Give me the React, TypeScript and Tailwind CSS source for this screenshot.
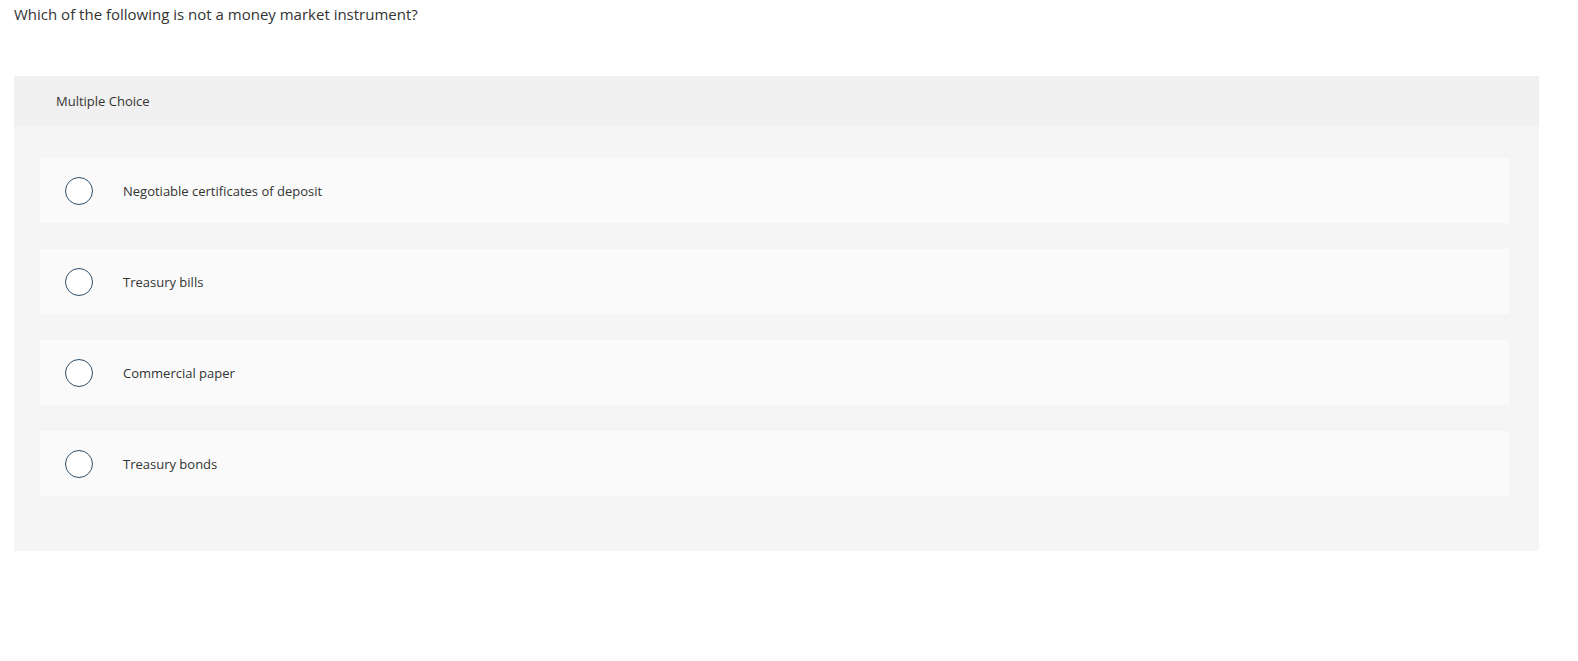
import React from "react";

const options = [
  "Negotiable certificates of deposit",
  "Treasury bills",
  "Commercial paper",
  "Treasury bonds",
];

const App = () => {
  return (
    <div
      className="w-[1578px] h-[661px] bg-white text-[#333]"
      style={{ fontFamily: "'Open Sans', sans-serif" }}
    >
      <p className="pl-[14px] pt-[4px] text-[15px] leading-[20px]">
        Which of the following is not a money market instrument?
      </p>

      <div className="ml-[14px] mt-[52px] w-[1525px] bg-[#f5f5f5]">
        <div className="h-[50px] bg-[#f0f0f0] pl-[42px] flex items-center pt-[2px] text-[13px]">
          Multiple Choice
        </div>
        <div className="pt-[32px] pb-[55px] pl-[26px] pr-[30px] flex flex-col gap-[26px]">
          {options.map((opt) => (
            <div
              key={opt}
              className="h-[65px] bg-[#fafafa] flex items-center pl-[25px]"
            >
              <span className="w-[28px] h-[28px] rounded-full border-[1.5px] border-[#2d4f6b] bg-white shrink-0" />
              <span className="ml-[30px] pt-[2px] text-[13px]">{opt}</span>
            </div>
          ))}
        </div>
      </div>
    </div>
  );
};

export default App;
